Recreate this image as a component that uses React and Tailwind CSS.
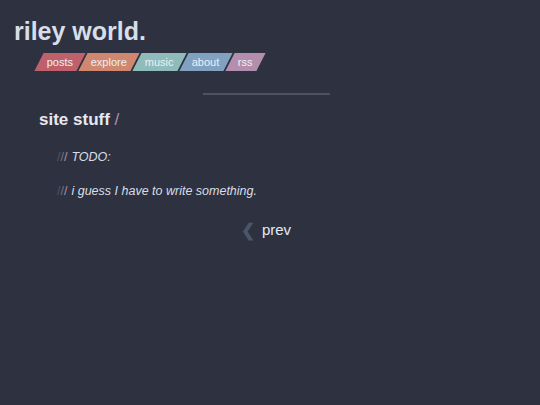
import React from 'react';

const tabs = [
    { label: 'posts', bg: 'bg-[#bf616a]' },
    { label: 'explore', bg: 'bg-[#d08770]' },
    { label: 'music', bg: 'bg-[#8fbcbb]' },
    { label: 'about', bg: 'bg-[#81a1c1]' },
    { label: 'rss', bg: 'bg-[#b48ead]' },
];

const Slashes = () => (
    <span className="mr-[4px] not-italic">
        <span className="text-[#4c566a]">/</span>
        <span className="text-[#7b6f8a]">/</span>
        <span className="text-[#b48ead]">/</span>
    </span>
);

export default function App() {
    return (
        <div className="min-h-[405px] w-full bg-[#2e3240] text-[#e5e9f0] font-['Liberation_Sans',Arial,sans-serif]">
            {/* header */}
            <header className="pl-[14px] pt-[17px]">
                <h1 className="text-[25px] font-bold leading-[29px] text-[#d8dee9]">riley world.</h1>
                <nav className="mt-[7px] ml-[25px] flex gap-[2px]">
                    {tabs.map((t) => (
                        <a
                            key={t.label}
                            className={`${t.bg} -skew-x-[27deg] h-[18px] px-[8px] flex items-center`}
                        >
                            <span className="skew-x-[27deg] text-[11px] leading-none text-[#eceff4]">{t.label}</span>
                        </a>
                    ))}
                </nav>
            </header>

            <main className="flex flex-col">
                <div className="mt-[22px] self-center ml-[-8px] w-[127px] h-[2px] bg-[#4a5263]" />

                <section className="pl-[39px] mt-[14px]">
                    <h2 className="text-[17px] font-bold leading-[22px] text-[#e5e9f0]">
                        site stuff <span className="text-[#b48ead] font-normal">/</span>
                    </h2>
                    <ul className="mt-[19px] ml-[18px] flex flex-col gap-[19px] text-[12.5px] italic text-[#d8dee9]">
                        <li className="leading-[15px]"><Slashes />TODO:</li>
                        <li className="leading-[15px]"><Slashes />i guess I have to write something.</li>
                    </ul>
                </section>

                <div className="mt-[22px] flex items-center justify-center gap-[7px] ml-[-8px]">
                    <span className="text-[#4c566a] text-[17px] leading-none font-bold">❮</span>
                    <span className="text-[15px] leading-[18px] text-[#e5e9f0]">prev</span>
                </div>
            </main>
        </div>
    );
}
